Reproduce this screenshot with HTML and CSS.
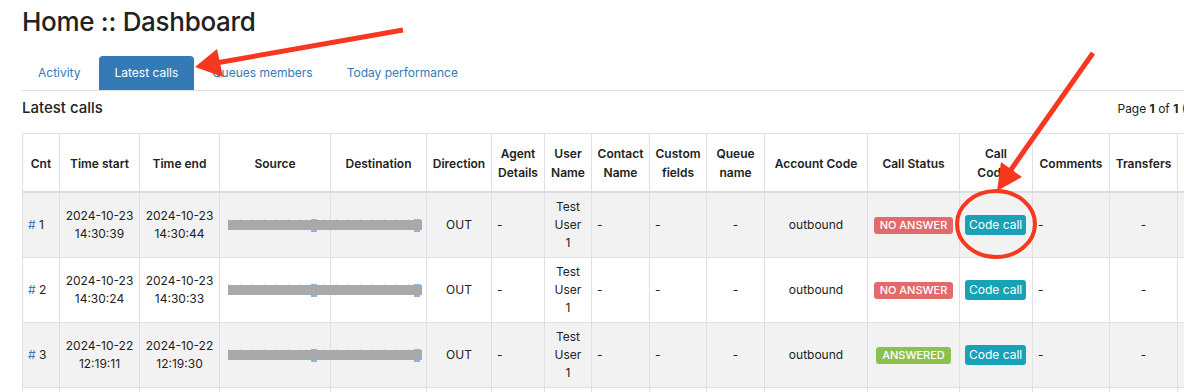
FILE: index.html
```html
<!DOCTYPE html>
<html>
<head>
    <title>Home :: Dashboard</title>
    <meta name="viewport" content="width=device-width, initial-scale=1.0">
    <link rel="stylesheet" href="styles.css">
</head>
<body>
    <div class="page">
        <h1 class="page-title">Home :: Dashboard</h1>
        <ul class="tabs">
            <li><a href="#">Activity</a></li>
            <li class="active"><a href="#">Latest calls</a></li>
            <li><a href="#">Queues members</a></li>
            <li><a href="#">Today performance</a></li>
        </ul>

        <div class="panel-head">
            <h2>Latest calls</h2>
            <div class="pager">Page <b>1</b> of <b>1</b> (4 records)</div>
        </div>

        <table class="calls">
            <colgroup>
                <col style="width: 37px">
                <col style="width: 80px">
                <col style="width: 80px">
                <col style="width: 111px">
                <col style="width: 96px">
                <col style="width: 65px">
                <col style="width: 53px">
                <col style="width: 47px">
                <col style="width: 58px">
                <col style="width: 57px">
                <col style="width: 58px">
                <col style="width: 103px">
                <col style="width: 92px">
                <col style="width: 73px">
                <col style="width: 77px">
                <col style="width: 68px">
                <col style="width: 68px">
            </colgroup>
            <thead>
                <tr>
                    <th>Cnt</th>
                    <th>Time start</th>
                    <th>Time end</th>
                    <th>Source</th>
                    <th>Destination</th>
                    <th>Direction</th>
                    <th>Agent<br>Details</th>
                    <th>User<br>Name</th>
                    <th>Contact<br>Name</th>
                    <th>Custom<br>fields</th>
                    <th>Queue<br>name</th>
                    <th>Account Code</th>
                    <th>Call Status</th>
                    <th>Call<br>Codes</th>
                    <th>Comments</th>
                    <th>Transfers</th>
                    <th>Recor<br>ding</th>
                </tr>
            </thead>
            <tbody>
                <tr>
                    <td><a class="num" href="#">#</a> 1</td>
                    <td class="c">2024-10-23<br>14:30:39</td>
                    <td class="c">2024-10-23<br>14:30:44</td>
                    <td><div class="redact"></div></td>
                    <td></td>
                    <td class="c">OUT</td>
                    <td>-</td>
                    <td class="c">Test<br>User<br>1</td>
                    <td>-</td>
                    <td>-</td>
                    <td class="c">-</td>
                    <td class="c">outbound</td>
                    <td class="c"><span class="badge badge-red">NO ANSWER</span></td>
                    <td><button class="btn-code">Code call</button></td>
                    <td>-</td>
                    <td class="c">-</td>
                    <td></td>
                </tr>
                <tr>
                    <td><a class="num" href="#">#</a> 2</td>
                    <td class="c">2024-10-23<br>14:30:24</td>
                    <td class="c">2024-10-23<br>14:30:33</td>
                    <td><div class="redact"></div></td>
                    <td></td>
                    <td class="c">OUT</td>
                    <td>-</td>
                    <td class="c">Test<br>User<br>1</td>
                    <td>-</td>
                    <td>-</td>
                    <td class="c">-</td>
                    <td class="c">outbound</td>
                    <td class="c"><span class="badge badge-red">NO ANSWER</span></td>
                    <td><button class="btn-code">Code call</button></td>
                    <td>-</td>
                    <td class="c">-</td>
                    <td></td>
                </tr>
                <tr>
                    <td><a class="num" href="#">#</a> 3</td>
                    <td class="c">2024-10-22<br>12:19:11</td>
                    <td class="c">2024-10-22<br>12:19:30</td>
                    <td><div class="redact"></div></td>
                    <td></td>
                    <td class="c">OUT</td>
                    <td>-</td>
                    <td class="c">Test<br>User<br>1</td>
                    <td>-</td>
                    <td>-</td>
                    <td class="c">-</td>
                    <td class="c">outbound</td>
                    <td class="c"><span class="badge badge-green">ANSWERED</span></td>
                    <td><button class="btn-code">Code call</button></td>
                    <td>-</td>
                    <td class="c">-</td>
                    <td></td>
                </tr>
                <tr>
                    <td><a class="num" href="#">#</a> 4</td>
                    <td class="c">2024-10-22<br>12:10:02</td>
                    <td class="c">2024-10-22<br>12:10:19</td>
                    <td><div class="redact"></div></td>
                    <td></td>
                    <td class="c">OUT</td>
                    <td>-</td>
                    <td class="c">Test<br>User<br>1</td>
                    <td>-</td>
                    <td>-</td>
                    <td class="c">-</td>
                    <td class="c">outbound</td>
                    <td class="c"><span class="badge badge-green">ANSWERED</span></td>
                    <td><button class="btn-code">Code call</button></td>
                    <td>-</td>
                    <td class="c">-</td>
                    <td></td>
                </tr>
            </tbody>
        </table>
    </div>

    <!-- red annotation marks drawn over the screenshot -->
    <svg class="marks" width="1184" height="392" viewBox="0 0 1184 392">
        <g fill="#f5381f" stroke="#f5381f">
            <line x1="403" y1="30" x2="216" y2="63" stroke-width="5"/>
            <polygon points="195,67 217,49 223,77" stroke="none"/>
            <line x1="1093" y1="53" x2="1010" y2="171" stroke-width="5"/>
            <polygon points="997,191 1001,162 1022,177" stroke="none"/>
            <ellipse cx="996" cy="224" rx="39" ry="33" fill="none" stroke-width="4"/>
        </g>
    </svg>
</body>
</html>
```

FILE: styles.css
```css
html, body {
    overflow: hidden;
}
body {
    margin: 0;
    font-family: Inter, "Helvetica Neue", Arial, sans-serif;
    color: #222;
    background-color: #fff;
}
.page {
    width: 1223px;
    padding-left: 22px;
}
.page-title {
    margin: 6px 0 0;
    font-size: 26px;
    line-height: 32px;
    font-weight: 500;
    letter-spacing: -0.3px;
    color: #222;
}
.tabs {
    list-style: none;
    display: flex;
    margin: 18px 0 0;
    padding: 0;
    border-bottom: 1px solid #dedede;
}
.tabs li {
    margin-right: 2px;
}
.tabs a {
    display: block;
    padding: 9px 16px;
    font-size: 12px;
    line-height: 16px;
    color: #337ab7;
    text-decoration: none;
    border-radius: 4px 4px 0 0;
}
.tabs li.active a {
    background-color: #337ab7;
    color: #fff;
}
.panel-head {
    display: flex;
    justify-content: space-between;
    align-items: baseline;
    padding-top: 7px;
    margin-bottom: 15px;
}
.panel-head h2 {
    margin: 0;
    font-size: 15px;
    line-height: 20px;
    font-weight: 500;
    color: #222;
}
.pager {
    font-size: 12px;
}
.calls {
    border-collapse: collapse;
    table-layout: fixed;
    width: 1223px;
    font-size: 12px;
    line-height: 18px;
}
.calls th, .calls td {
    border: 1px solid #dfe0e4;
    padding: 5px;
    vertical-align: middle;
    text-align: left;
}
.calls th {
    padding: 10px 4px 9px;
    line-height: 19px;
    font-weight: 600;
    text-align: center;
    border-bottom: 2px solid #dcdde2;
}
.calls td.c {
    text-align: center;
}
.calls tbody tr:nth-child(odd) {
    background-color: #f2f2f2;
}
.num {
    color: #337ab7;
    text-decoration: none;
}
.redact {
    position: relative;
    z-index: 1;
    width: 194px;
    height: 13px;
    margin-left: 3px;
    background:
        linear-gradient(#a9a9a9, #a9a9a9) 0 1.5px / 100% 10px no-repeat,
        linear-gradient(#8db4df, #8db4df) 83px 0 / 6px 100% no-repeat,
        linear-gradient(#8db4df, #8db4df) 186px 0 / 6px 100% no-repeat,
        repeating-linear-gradient(90deg, #d2d2d2 0 1px, transparent 1px 12px) 0 0 / 100% 2px no-repeat;
}
.badge {
    display: inline-block;
    padding: 2px 6px;
    font-size: 11px;
    line-height: 13px;
    font-weight: 500;
    white-space: nowrap;
    color: #fff;
    border-radius: 3px;
}
.badge-red {
    background-color: #e26a6a;
}
.badge-green {
    background-color: #8cc152;
}
.btn-code {
    padding: 1px 4px;
    font-family: inherit;
    font-size: 12px;
    line-height: 18px;
    white-space: nowrap;
    color: #fff;
    background-color: #17a2b8;
    border: none;
    border-radius: 3px;
}
.marks {
    position: absolute;
    top: 0;
    left: 0;
    pointer-events: none;
}
```
